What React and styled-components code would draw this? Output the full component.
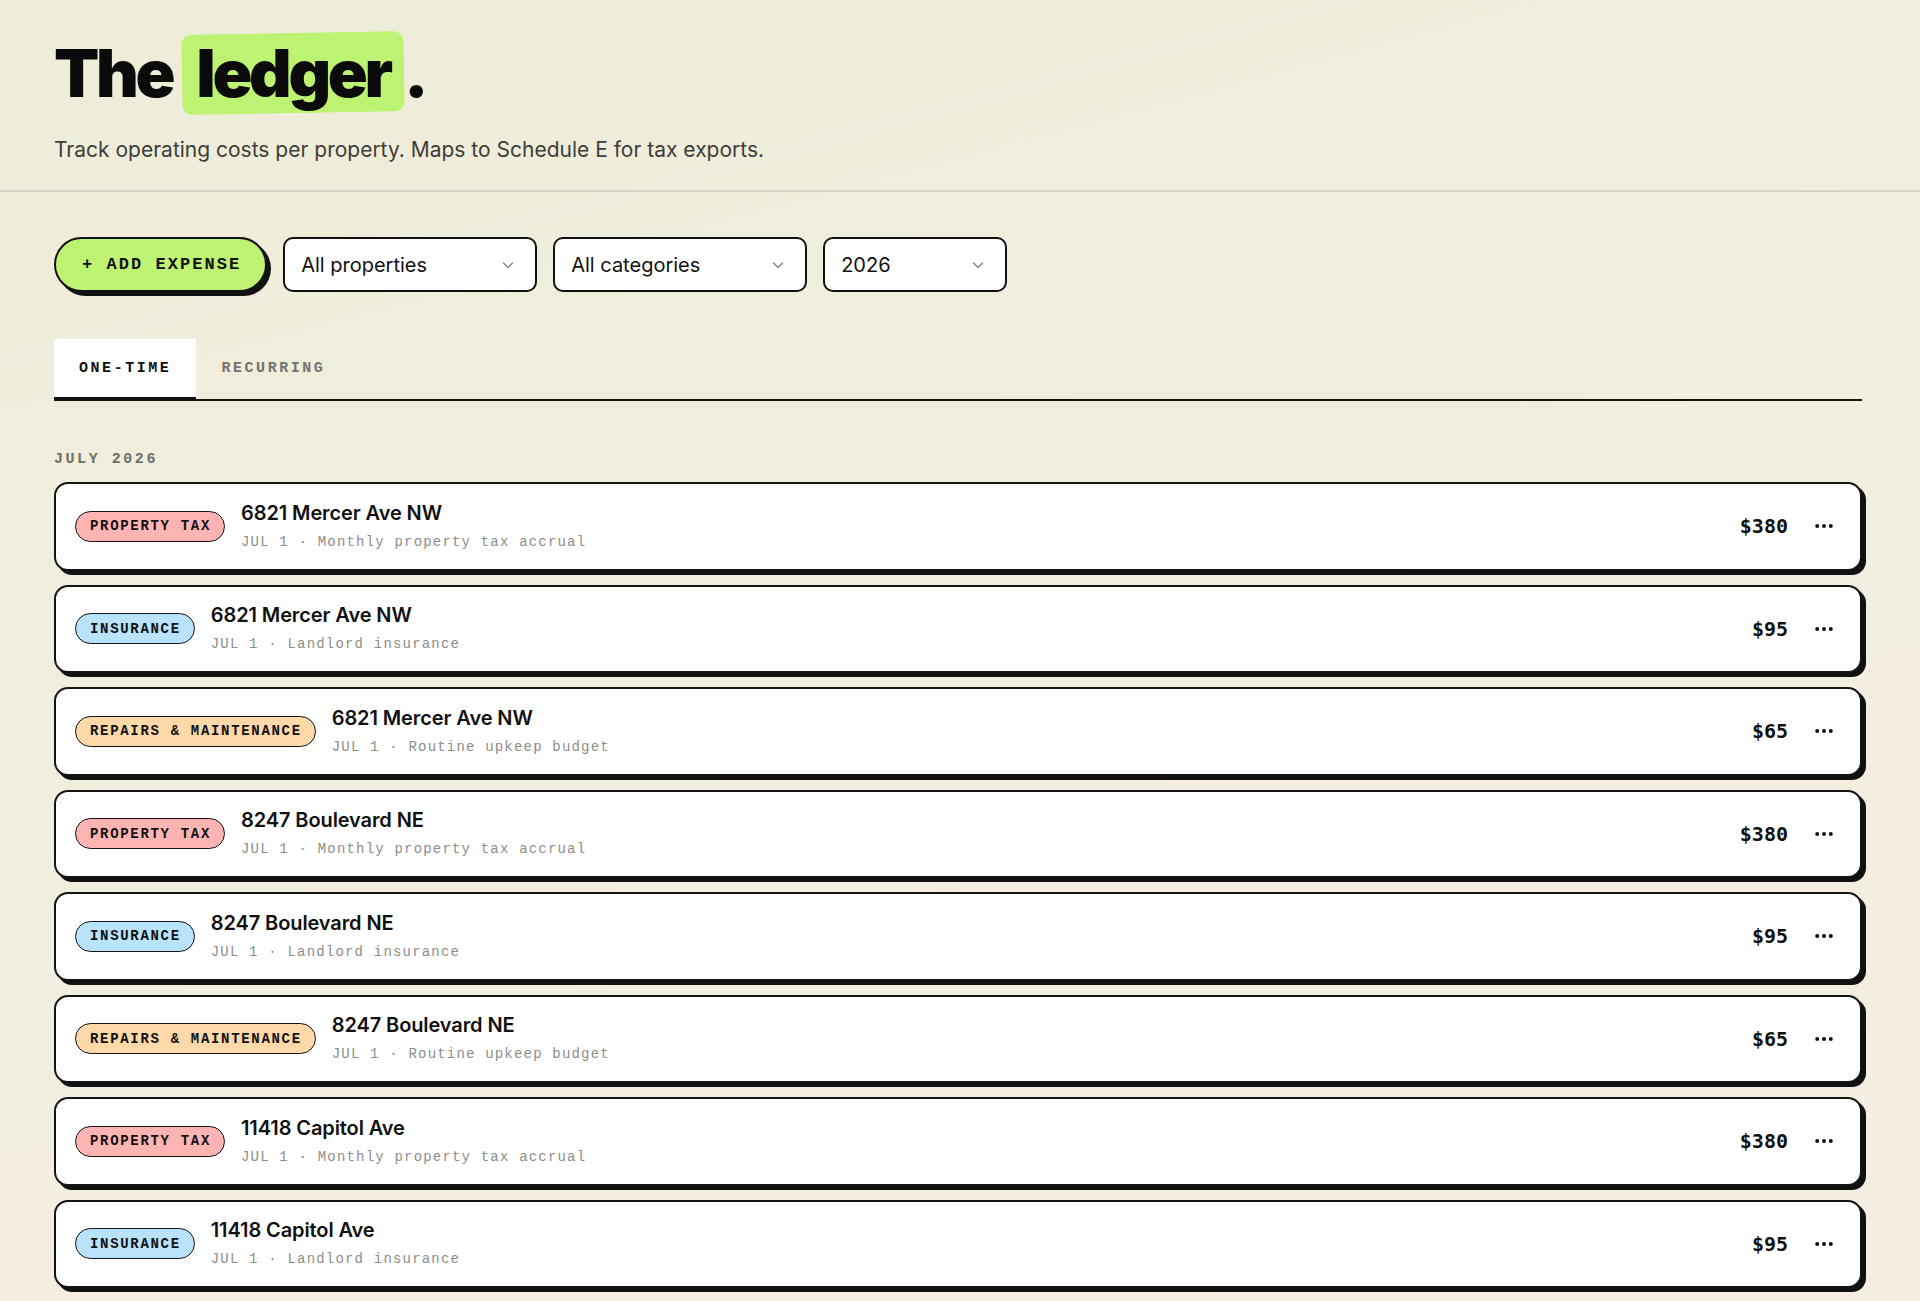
import React from "react";
import styled, { createGlobalStyle } from "styled-components";

const GlobalStyle = createGlobalStyle`
  html, body { margin: 0; padding: 0; }
  * { box-sizing: border-box; }
  body {
    min-height: 100vh;
    background: linear-gradient(165deg, #eeedd8 0%, #f2eedf 45%, #f5eee2 100%);
    font-family: Inter, "Noto Sans", sans-serif;
    color: #111;
  }
`;

const mono = `"Liberation Mono", "DejaVu Sans Mono", monospace`;

const Header = styled.header`
  padding: 33px 54px 26px;
  border-bottom: 2px solid #d6d2c4;
`;

const Title = styled.h1`
  margin: 0;
  font-family: Inter, sans-serif;
  font-size: 66px;
  font-weight: 900;
  letter-spacing: -0.05em;
  line-height: 80px;
  color: #0b0b0b;
`;

const Highlight = styled.span`
  position: relative;
  display: inline-block;
  padding: 0 14px;
  z-index: 0;
  &::before {
    content: "";
    position: absolute;
    inset: 0;
    background: #bdf272;
    border-radius: 10px;
    transform: rotate(-1deg);
    z-index: -1;
  }
`;

const Subtitle = styled.p`
  margin: 23px 0 0;
  font-size: 21px;
  line-height: 28px;
  color: #3d3d3a;
`;

const Main = styled.main`
  padding: 45px 58px 40px 54px;
`;

const Toolbar = styled.div`
  display: flex;
  align-items: center;
  gap: 16px;
`;

const AddButton = styled.button`
  height: 55px;
  padding: 0 24px 0 26px;
  border: 2px solid #111;
  border-radius: 999px;
  background: #bdf272;
  box-shadow: 4px 4px 0 #111;
  font-family: ${mono};
  font-weight: 700;
  font-size: 17px;
  letter-spacing: 0.12em;
  color: #111;
  cursor: pointer;
`;

const Select = styled.div`
  width: ${(p) => p.$w}px;
  height: 55px;
  border: 2px solid #111;
  border-radius: 10px;
  background: #fff;
  padding: 0 20px 0 16px;
  display: flex;
  align-items: center;
  justify-content: space-between;
  font-size: 20px;
  color: #111;
`;

const Tabs = styled.div`
  margin-top: 47px;
  display: flex;
  border-bottom: 2px solid #111;
`;

const Tab = styled.div`
  height: 62px;
  margin-bottom: -2px;
  padding: 0 25px;
  display: flex;
  align-items: center;
  font-family: ${mono};
  font-weight: 700;
  font-size: 15px;
  letter-spacing: 0.17em;
  background: ${(p) => (p.$active ? "#fff" : "transparent")};
  color: ${(p) => (p.$active ? "#111" : "#727270")};
  border-bottom: 4px solid ${(p) => (p.$active ? "#111" : "transparent")};
`;

const SectionLabel = styled.div`
  margin-top: 49px;
  font-family: ${mono};
  font-weight: 700;
  font-size: 15px;
  line-height: 20px;
  letter-spacing: 0.17em;
  color: #6e6e6a;
`;

const List = styled.div`
  margin-top: 12px;
  display: flex;
  flex-direction: column;
  gap: 14px;
`;

const Row = styled.div`
  height: 88.5px;
  border: 2px solid #151515;
  border-radius: 14px;
  background: #fff;
  box-shadow: 4px 4px 0 #111;
  display: flex;
  align-items: center;
  gap: 16px;
  padding: 0 20px 0 19px;
`;

const pillColors = {
  tax: "#ffb4b4",
  ins: "#b8e3fb",
  rep: "#fdd8a8",
};

const Pill = styled.span`
  height: 31px;
  padding: 0 13px 0 14px;
  border: 1.5px solid #111;
  border-radius: 999px;
  background: ${(p) => pillColors[p.$kind]};
  display: inline-flex;
  align-items: center;
  font-family: ${mono};
  font-weight: 700;
  font-size: 14px;
  letter-spacing: 0.12em;
  color: #111;
  white-space: nowrap;
`;

const Info = styled.div`
  display: flex;
  flex-direction: column;
  gap: 7px;
`;

const Address = styled.div`
  font-size: 20px;
  font-weight: 600;
  line-height: 24px;
  letter-spacing: -0.005em;
  color: #111;
`;

const Meta = styled.div`
  font-family: ${mono};
  font-size: 14px;
  line-height: 20px;
  letter-spacing: 0.085em;
  color: #8d8d8a;
`;

const Amount = styled.div`
  margin-left: auto;
  font-family: "DejaVu Sans Mono", monospace;
  font-weight: 700;
  font-size: 20px;
  color: #111;
`;

const DotsButton = styled.button`
  width: 32px;
  height: 32px;
  margin-left: 4px;
  border: none;
  background: transparent;
  padding: 0;
  display: flex;
  align-items: center;
  justify-content: center;
  cursor: pointer;
`;

const Chevron = () => (
  <svg width="14" height="14" viewBox="0 0 14 14" fill="none">
    <path d="M2.5 5l4.5 4.5L11.5 5" stroke="#8a8a8a" strokeWidth="1.5" strokeLinecap="round" strokeLinejoin="round" />
  </svg>
);

const Dots = () => (
  <svg width="18" height="6" viewBox="0 0 18 6">
    <circle cx="2.2" cy="3" r="2" fill="#111" />
    <circle cx="9" cy="3" r="2" fill="#111" />
    <circle cx="15.8" cy="3" r="2" fill="#111" />
  </svg>
);

const labels = { tax: "PROPERTY TAX", ins: "INSURANCE", rep: "REPAIRS & MAINTENANCE" };
const notes = {
  tax: "Monthly property tax accrual",
  ins: "Landlord insurance",
  rep: "Routine upkeep budget",
};
const amounts = { tax: "$380", ins: "$95", rep: "$65" };

const addresses = ["6821 Mercer Ave NW", "8247 Boulevard NE", "11418 Capitol Ave"];
const rows = [];
addresses.forEach((a) => {
  ["tax", "ins", "rep"].forEach((k) => rows.push({ address: a, kind: k }));
});
const visibleRows = rows.slice(0, 8);

export default function App() {
  return (
    <>
      <GlobalStyle />
      <Header>
        <Title>
          The <Highlight>ledger</Highlight>.
        </Title>
        <Subtitle>Track operating costs per property. Maps to Schedule E for tax exports.</Subtitle>
      </Header>
      <Main>
        <Toolbar>
          <AddButton>+ ADD EXPENSE</AddButton>
          <Select $w={254}>
            <span>All properties</span>
            <Chevron />
          </Select>
          <Select $w={254}>
            <span>All categories</span>
            <Chevron />
          </Select>
          <Select $w={184}>
            <span>2026</span>
            <Chevron />
          </Select>
        </Toolbar>
        <Tabs>
          <Tab $active>ONE-TIME</Tab>
          <Tab>RECURRING</Tab>
        </Tabs>
        <SectionLabel>JULY 2026</SectionLabel>
        <List>
          {visibleRows.map((r, i) => (
            <Row key={i}>
              <Pill $kind={r.kind}>{labels[r.kind]}</Pill>
              <Info>
                <Address>{r.address}</Address>
                <Meta>JUL 1 · {notes[r.kind]}</Meta>
              </Info>
              <Amount>{amounts[r.kind]}</Amount>
              <DotsButton aria-label="More">
                <Dots />
              </DotsButton>
            </Row>
          ))}
        </List>
      </Main>
    </>
  );
}
